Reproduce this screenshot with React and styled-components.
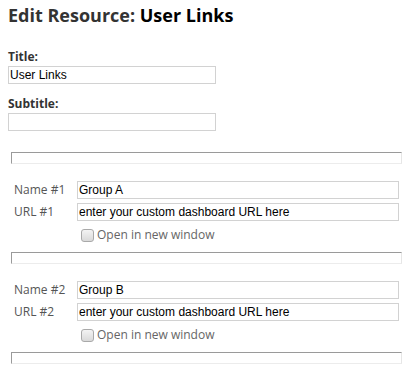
import React from 'react'
import styled, { createGlobalStyle } from 'styled-components'

const GlobalStyle = createGlobalStyle`
    html, body { margin: 0; padding: 0; background: #fff; }
    body { font-family: 'Open Sans', 'DejaVu Sans', sans-serif; }
`

const Page = styled.div`
    padding: 3px 8px 0 8px;
    width: 413px;
    box-sizing: border-box;
`

const Heading = styled.h2`
    margin: 0 0 22px 0;
    font-size: 18px;
    line-height: 24px;
    font-weight: 700;
    color: #333;
    span { color: #000; }
`

const Field = styled.div`
    display: flex;
    flex-direction: column;
    align-items: flex-start;
    margin-bottom: ${p => p.gap || 0}px;
`

const FieldLabel = styled.label`
    font-size: 12px;
    line-height: 16px;
    font-weight: 700;
    color: #333;
    margin-bottom: 1px;
`

const TextInput = styled.input`
    box-sizing: border-box;
    height: 18px;
    width: ${p => p.wide ? '100%' : '208px'};
    margin: 0;
    padding: 0 2px 0 1px;
    border: 1px solid #d2d2d2;
    font-family: 'Liberation Sans', Arial, sans-serif;
    font-size: 12px;
    color: #000;
    background: #fff;
    outline: none;
`

const Divider = styled.div`
    box-sizing: border-box;
    height: 12px;
    margin: 0 0 0 3px;
    width: 391px;
    border-style: solid;
    border-width: 1px;
    border-color: #9a9a9a #e6e6e6 #ececec #9a9a9a;
`

const LinkGroup = styled.div`
    width: 391px;
    margin-left: 3px;
    padding: 17px 3px 9px 3px;
    box-sizing: border-box;
    display: grid;
    grid-template-columns: 63px 1fr;
    row-gap: 4px;
`

const RowLabel = styled.span`
    font-size: 12px;
    line-height: 18px;
    color: #555;
`

const CheckRow = styled.label`
    grid-column: 2;
    display: flex;
    align-items: center;
    gap: 3px;
    margin-top: 2px;
    padding-left: 4px;
    font-size: 12px;
    line-height: 16px;
    color: #666;
`

const Check = styled.input.attrs({ type: 'checkbox' })`
    appearance: none;
    margin: 0;
    width: 13px;
    height: 13px;
    border: 1px solid #a9a9a9;
    border-radius: 3px;
    background: linear-gradient(#f4f4f4, #d9d9d9);
    box-sizing: border-box;
`

const links = [
    { n: 1, name: 'Group A', url: 'enter your custom dashboard URL here' },
    { n: 2, name: 'Group B', url: 'enter your custom dashboard URL here' },
]

export default function App() {
    return (
        <Page>
            <GlobalStyle />
            <Heading>Edit Resource: <span>User Links</span></Heading>

            <Field gap={12}>
                <FieldLabel>Title:</FieldLabel>
                <TextInput defaultValue='User Links' />
            </Field>
            <Field gap={21}>
                <FieldLabel>Subtitle:</FieldLabel>
                <TextInput defaultValue='' />
            </Field>

            <Divider />
            {links.map(l => (
                <React.Fragment key={l.n}>
                    <LinkGroup>
                        <RowLabel>Name #{l.n}</RowLabel>
                        <TextInput wide defaultValue={l.name} />
                        <RowLabel>URL #{l.n}</RowLabel>
                        <TextInput wide defaultValue={l.url} />
                        <CheckRow>
                            <Check />
                            Open in new window
                        </CheckRow>
                    </LinkGroup>
                    <Divider />
                </React.Fragment>
            ))}
        </Page>
    )
}
